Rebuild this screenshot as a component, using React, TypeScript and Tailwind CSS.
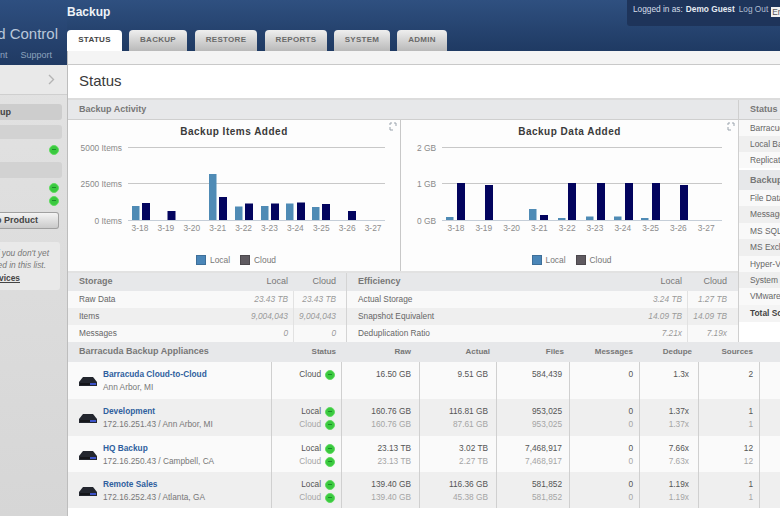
const TABS = [
  { label: "STATUS", width: "w-[55px]", gap: "mr-[7px]", active: true },
  { label: "BACKUP", width: "w-[58px]", gap: "mr-[8px]" },
  { label: "RESTORE", width: "w-[62px]", gap: "mr-[8px]" },
  { label: "REPORTS", width: "w-[62px]", gap: "mr-[7px]" },
  { label: "SYSTEM", width: "w-[56px]", gap: "mr-[7px]" },
  { label: "ADMIN", width: "w-[50px]", gap: "" },
];

type Bar = { x: number; top: number; local?: boolean };

const ITEMS_BARS: Bar[] = [
  { x: 132, top: 206, local: true },
  { x: 142, top: 203 },
  { x: 167.5, top: 211 },
  { x: 209, top: 174, local: true },
  { x: 219, top: 197 },
  { x: 235, top: 206.5, local: true },
  { x: 245, top: 203.5 },
  { x: 261, top: 206, local: true },
  { x: 271, top: 203.5 },
  { x: 286, top: 203.5, local: true },
  { x: 297, top: 202.5 },
  { x: 312, top: 207, local: true },
  { x: 322, top: 204 },
  { x: 348, top: 211 },
];

const DATA_BARS: Bar[] = [
  { x: 446, top: 217, local: true },
  { x: 457, top: 183 },
  { x: 485, top: 185 },
  { x: 529, top: 209, local: true },
  { x: 540, top: 215 },
  { x: 558, top: 218, local: true },
  { x: 568, top: 183 },
  { x: 586, top: 216.5, local: true },
  { x: 597, top: 183 },
  { x: 614, top: 216.5, local: true },
  { x: 625, top: 183 },
  { x: 641, top: 218, local: true },
  { x: 652, top: 183 },
  { x: 680, top: 185 },
];

const DAYS = ["3-18", "3-19", "3-20", "3-21", "3-22", "3-23", "3-24", "3-25", "3-26", "3-27"];

const COL_PADDING = ["pr-[6px]", "pr-[8px]", "pr-[8px]", "pr-[7px]", "pr-[6px]", "pr-[9px]", "pr-[6px]"];

const APPLIANCES = [
  {
    name: "Barracuda Cloud-to-Cloud",
    sub: "Ann Arbor, MI",
    rows: [["Cloud", "16.50 GB", "9.51 GB", "584,439", "0", "1.3x", "2"]],
    bg: "bg-[#fafafa]",
    height: "h-[37px]",
  },
  {
    name: "Development",
    sub: "172.16.251.43 / Ann Arbor, MI",
    rows: [
      ["Local", "160.76 GB", "116.81 GB", "953,025", "0", "1.37x", "1"],
      ["Cloud", "160.76 GB", "87.61 GB", "953,025", "0", "1.37x", "1"],
    ],
    bg: "bg-[#efefef]",
    height: "h-[37px]",
  },
  {
    name: "HQ Backup",
    sub: "172.16.250.43 / Campbell, CA",
    rows: [
      ["Local", "23.13 TB", "3.02 TB", "7,468,917", "0", "7.66x", "12"],
      ["Cloud", "23.13 TB", "2.27 TB", "7,468,917", "0", "7.63x", "12"],
    ],
    bg: "bg-[#fafafa]",
    height: "h-[36px]",
  },
  {
    name: "Remote Sales",
    sub: "172.16.252.43 / Atlanta, GA",
    rows: [
      ["Local", "139.40 GB", "116.36 GB", "581,852", "0", "1.19x", "1"],
      ["Cloud", "139.40 GB", "45.38 GB", "581,852", "0", "1.19x", "1"],
    ],
    bg: "bg-[#efefef]",
    height: "h-[36px]",
  },
];

const TABLE_COLS = "grid grid-cols-[203px_70px_78px_77px_73px_70px_59px_61px_1fr]";

function Dot() {
  return (
    <span className="flex items-center justify-center w-[10px] h-[10px] shrink-0 rounded-full bg-[#3ac93f] border border-[#62dc62]">
      <span className="w-[4px] h-px bg-[#1d8a2a]" />
    </span>
  );
}

function Chart({
  bars,
  offset,
  lineStart,
  lineEnd,
  labels,
  dayStart,
  dayStep,
}: {
  bars: Bar[];
  offset: number;
  lineStart: number;
  lineEnd: number;
  labels: string[];
  dayStart: number;
  dayStep: number;
}) {
  const lines = [7, 43, 80];
  return (
    <svg className="block" width="100%" height="100" fontFamily="'Liberation Sans', sans-serif" fontSize="8.4">
      {lines.map((y, i) => (
        <g key={y}>
          <line
            x1={lineStart - offset}
            x2={lineEnd - offset}
            y1={y + 0.5}
            y2={y + 0.5}
            stroke={i === 2 ? "#c5ced8" : "#c8c8c8"}
          />
          <text x={lineStart - offset - 6} y={y + 3.5} textAnchor="end" fill="#8a8a8a">
            {labels[i]}
          </text>
        </g>
      ))}
      {bars.map((b) => (
        <rect
          key={b.x}
          x={b.x - offset}
          y={b.top - 140}
          width={b.local ? 7.5 : 8}
          height={220 - b.top}
          fill={b.local ? "#4f8bb5" : "#03045e"}
        />
      ))}
      {DAYS.map((d, i) => (
        <text key={d} x={dayStart - offset + i * dayStep} y={91} textAnchor="middle" fill="#8d8d8d">
          {d}
        </text>
      ))}
    </svg>
  );
}

function ChartPanel({ title, children }: { title: string; children: React.ReactNode }) {
  return (
    <div className="relative h-full bg-[#fdfdfd]">
      <svg className="absolute right-[3px] top-[2px]" width="8" height="9" viewBox="0 0 8 9" fill="none" stroke="#9aa3ad">
        <path d="M1 1h2M1 1v2M7 1v3M5 1h2M1 8h3M1 5v3" />
      </svg>
      <div className="h-[20px] pt-[5px] text-center text-[10px] leading-[14px] font-bold tracking-[0.5px] text-[#3a3a3a]">
        {title}
      </div>
      {children}
      <div className="flex justify-center items-center gap-[4px] mt-[14px] pl-[4px] text-[8.4px] text-[#777]">
        <span className="w-[10px] h-[10px] bg-[#4a86b8] border border-[#3e6f99]" />
        <span className="mr-[6px]">Local</span>
        <span className="w-[10px] h-[10px] bg-[#5f5a60] border border-[#4c484d]" />
        <span>Cloud</span>
      </div>
    </div>
  );
}

function StatRows({
  rows,
  col1,
  col2,
  pad2,
}: {
  rows: string[][];
  col1: string;
  col2: string;
  pad2: string;
}) {
  return (
    <>
      {rows.map((r, i) => (
        <div
          key={r[0]}
          className={`flex items-center h-[17px] text-[8.3px] ${i === 1 ? "bg-[#efefef]" : "bg-[#f9f9f9]"}`}
        >
          <span className="flex-1 pl-[11px] text-[#666]">{r[0]}</span>
          <span className={`${col1} h-full flex items-center justify-end pr-[5px] italic text-[#9a9a9a] whitespace-nowrap`}>
            {r[1]}
          </span>
          <span
            className={`${col2} ${pad2} h-full flex items-center justify-end italic text-[#9a9a9a] border-l border-[#e2e2e2] whitespace-nowrap`}
          >
            {r[2]}
          </span>
        </div>
      ))}
    </>
  );
}

export default function App() {
  return (
    <div className="flex w-[780px] h-[516px] overflow-hidden bg-white font-['Liberation_Sans',Arial,sans-serif]">
      {/* Sidebar, cut off by the left edge */}
      <aside className="w-[67px] shrink-0 h-full bg-gradient-to-b from-[#e4e4e4] to-[#d6d6d6] overflow-hidden">
        <div className="h-[65px] bg-gradient-to-b from-[#2e4f80] to-[#203a63] flex flex-col">
          <div className="flex justify-end w-[58px] mt-[24px] text-[15px] leading-[19px] text-[#b9c7da] whitespace-nowrap">
            Barracuda Cloud Control
          </div>
          <div className="flex justify-end w-[52px] gap-[13px] mt-[6px] text-[9px] leading-[12px] text-[#8ea3be] whitespace-nowrap">
            <span>Management</span>
            <span>Support</span>
          </div>
        </div>
        <div className="h-[30px] border-b border-[#cfcfcf] bg-[#e9e9e9] flex items-center justify-end pr-[12px]">
          <svg width="7" height="11" viewBox="0 0 7 11" fill="none" stroke="#b4b4b4" strokeWidth="1.4">
            <path d="M1 1l4.5 4.5L1 10" />
          </svg>
        </div>
        <div className="w-[62px] h-[16px] mt-[9px] rounded-r-[3px] bg-[#cdcdcd]">
          <div className="flex justify-end w-[11px] text-[9px] leading-[16px] font-bold text-[#444] whitespace-nowrap">Backup</div>
        </div>
        <div className="w-[62px] h-[14px] mt-[5px] rounded-r-[3px] bg-[#d2d2d2]" />
        <div className="w-[59px] h-[15px] mt-[3px] flex justify-end items-center">
          <Dot />
        </div>
        <div className="w-[62px] h-[16px] mt-[5px] rounded-r-[3px] bg-[#d2d2d2]" />
        <div className="w-[59px] h-[13px] mt-[3px] flex justify-end items-center">
          <Dot />
        </div>
        <div className="w-[59px] h-[13px] flex justify-end items-center">
          <Dot />
        </div>
        <div className="w-[59px] h-[17px] mt-[5px] rounded-r-[3px] border border-l-0 border-[#a0a0a0] bg-gradient-to-b from-[#f4f4f4] to-[#cacaca]">
          <div className="flex justify-end w-[38px] text-[9px] leading-[15px] font-bold text-[#444] whitespace-nowrap">Backup Product</div>
        </div>
        <div className="w-[60px] h-[48px] mt-[13px] rounded-r-[3px] bg-[#e9e9e9] pt-[5px] text-[8.4px] leading-[12px] italic text-[#777] whitespace-nowrap">
          <div className="flex justify-end w-[49px]">If you don't yet</div>
          <div className="flex justify-end w-[46px]">isted in this list.</div>
          <div className="flex justify-end w-[20px] mt-[1px] not-italic font-bold text-[#444] underline">Services</div>
        </div>
      </aside>

      <div className="w-px shrink-0 bg-[#bdbdbd]" />

      <main className="flex-1 min-w-0 flex flex-col">
        {/* Top bar */}
        <header className="relative h-[51px] shrink-0 -ml-px bg-gradient-to-b from-[#2f5080] to-[#1f3a63]">
          <div className="absolute left-[560px] right-0 top-0 h-[26px] rounded-bl-[3px] bg-[#1e345a]" />
          <div className="relative flex items-start h-[30px]">
            <div className="w-[566px] shrink-0 pt-[5px] text-[12px] leading-[15px] font-bold text-[#eef2f7]">Backup</div>
            <div className="flex items-start pt-[4px] text-[8.3px] leading-[11px] whitespace-nowrap gap-[3px]">
              <span className="text-[#d7dfea]">Logged in as:</span>
              <span className="font-bold text-[#e6ebf2]">Demo Guest</span>
              <span className="text-[#aebdd1] ml-px">Log Out</span>
              <span className="w-[20px] h-[10px] mt-[3px] bg-[#f2f2f2] text-[#555] pl-[1px] leading-[10px]">English</span>
            </div>
          </div>
          <nav className="flex h-[21px]">
            {TABS.map((t) => (
              <div
                key={t.label}
                className={`${t.width} ${t.gap} rounded-t-[4px] flex items-center justify-center pb-px text-[8px] font-bold tracking-[0.3px] ${
                  t.active ? "bg-white text-[#444]" : "bg-gradient-to-b from-[#efefef] to-[#b9b9b9] text-[#6a6a6a]"
                }`}
              >
                {t.label}
              </div>
            ))}
          </nav>
        </header>
        <div className="h-[14px] shrink-0 bg-[#f4f4f4] border-b border-[#c9c9c9]" />

        <div className="h-[35px] shrink-0 flex items-center pl-[11px] text-[15px] text-[#3a3a3a] border-b-2 border-[#dcdcdc]">
          Status
        </div>

        <div className="flex shrink-0 h-[242px]">
          <div className="w-[670px] shrink-0 flex flex-col">
            <div className="h-[20px] shrink-0 bg-[#e7e8ea] border-b border-[#cfcfcf] flex items-center pl-[11px] text-[9px] font-bold text-[#777]">
              Backup Activity
            </div>

            <div className="flex h-[151px] shrink-0">
              <div className="w-[333px] shrink-0 border-r border-[#c8c8c8]">
                <ChartPanel title="Backup Items Added">
                  <Chart
                    bars={ITEMS_BARS}
                    offset={68}
                    lineStart={128}
                    lineEnd={385}
                    labels={["5000 Items", "2500 Items", "0 Items"]}
                    dayStart={140}
                    dayStep={25.9}
                  />
                </ChartPanel>
              </div>
              <div className="flex-1">
                <ChartPanel title="Backup Data Added">
                  <Chart
                    bars={DATA_BARS}
                    offset={401}
                    lineStart={442}
                    lineEnd={722}
                    labels={["2 GB", "1 GB", "0 GB"]}
                    dayStart={456}
                    dayStep={27.8}
                  />
                </ChartPanel>
              </div>
            </div>

            <div className="flex flex-1 border-t-2 border-[#e2e2e2]">
              <div className="w-[279px] shrink-0 border-r border-[#d4d4d4]">
                <div className="flex items-center h-[18px] bg-[#e7e8ea] text-[9px] font-bold text-[#777]">
                  <span className="flex-1 pl-[11px]">Storage</span>
                  <span className="w-[53px] text-right pr-[5px] font-normal">Local</span>
                  <span className="w-[53px] text-right pr-[10px] font-normal">Cloud</span>
                </div>
                <StatRows
                  col1="w-[62px]"
                  col2="w-[53px]"
                  pad2="pr-[10px]"
                  rows={[
                    ["Raw Data", "23.43 TB", "23.43 TB"],
                    ["Items", "9,004,043", "9,004,043"],
                    ["Messages", "0", "0"],
                  ]}
                />
              </div>
              <div className="flex-1">
                <div className="flex items-center h-[18px] bg-[#e7e8ea] text-[9px] font-bold text-[#777]">
                  <span className="flex-1 pl-[11px]">Efficiency</span>
                  <span className="w-[53px] text-right pr-[5px] font-normal">Local</span>
                  <span className="w-[51px] text-right pr-[11px] font-normal">Cloud</span>
                </div>
                <StatRows
                  col1="w-[53px]"
                  col2="w-[51px]"
                  pad2="pr-[11px]"
                  rows={[
                    ["Actual Storage", "3.24 TB", "1.27 TB"],
                    ["Snapshot Equivalent", "14.09 TB", "14.09 TB"],
                    ["Deduplication Ratio", "7.21x", "7.19x"],
                  ]}
                />
              </div>
            </div>
          </div>

          {/* Right panel, cut off by the right edge */}
          <div className="flex-1 min-w-0 border-l border-[#cfcfcf] text-[8.4px] text-[#666] whitespace-nowrap">
            <div className="h-[20px] bg-[#e7e8ea] border-b border-[#cfcfcf] pl-[11px] text-[9px] leading-[19px] font-bold text-[#777]">
              Status
            </div>
            {["Barracuda Cloud", "Local Backup", "Replication"].map((t, i) => (
              <div key={t} className={`h-[16px] pl-[11px] leading-[16px] ${i === 1 ? "bg-[#efefef]" : "bg-[#f9f9f9]"}`}>
                {t}
              </div>
            ))}
            <div className="h-[20px] mt-[2px] bg-[#e7e8ea] pl-[11px] text-[9px] leading-[20px] font-bold text-[#777]">
              Backup Sources
            </div>
            {["File Data", "Messages", "MS SQL", "MS Exchange", "Hyper-V", "System State", "VMware"].map((t, i) => (
              <div key={t} className={`h-[16.4px] pl-[11px] leading-[16.4px] ${i % 2 === 1 ? "bg-[#efefef]" : "bg-[#f9f9f9]"}`}>
                {t}
              </div>
            ))}
            <div className="h-[17px] pl-[11px] leading-[17px] font-bold text-[#444] bg-[#f4f4f4]">Total Sources</div>
          </div>
        </div>

        {/* Appliance table */}
        <div className={`${TABLE_COLS} h-[20px] shrink-0 bg-[#e7e8ea] items-center text-[8px] font-bold text-[#777] text-right`}>
          <span className="pl-[11px] text-left text-[9px]">Barracuda Backup Appliances</span>
          <span className="pr-[5px]">Status</span>
          <span className="pr-[8px]">Raw</span>
          <span className="pr-[6px]">Actual</span>
          <span className="pr-[5px]">Files</span>
          <span className="pr-[6px]">Messages</span>
          <span className="pr-[6px]">Dedupe</span>
          <span className="pr-[6px]">Sources</span>
        </div>
        {APPLIANCES.map((a) => (
          <div key={a.name} className={`${TABLE_COLS} ${a.height} shrink-0 ${a.bg} text-[8.3px] leading-[13px]`}>
            <div className="flex items-start pl-[11px] pt-[6px]">
              <svg className="mt-[9px] mr-[6px] shrink-0" width="18" height="9" viewBox="0 0 18 9">
                <path d="M4 0h10l4 5v4H0V5z" fill="#23262e" />
                <rect x="1" y="6" width="16" height="2" fill="#141519" />
                <rect x="11" y="6" width="6" height="2" fill="#3c52c8" />
              </svg>
              <div className="whitespace-nowrap">
                <div className="font-bold text-[#2f5f9e]">{a.name}</div>
                <div className="text-[#777]">{a.sub}</div>
              </div>
            </div>
            {COL_PADDING.map((pad, col) => (
              <div key={col} className={`border-l border-[#d0d0d0] pt-[6px] text-right ${pad}`}>
                {a.rows.map((r, i) => (
                  <div
                    key={r[0]}
                    className={`flex justify-end items-center gap-[4px] h-[13px] ${i === 0 ? "text-[#555]" : "text-[#a5a5a5]"}`}
                  >
                    {r[col]}
                    {col === 0 && <Dot />}
                  </div>
                ))}
              </div>
            ))}
            <div className="border-l border-[#d0d0d0]" />
          </div>
        ))}
      </main>
    </div>
  );
}
